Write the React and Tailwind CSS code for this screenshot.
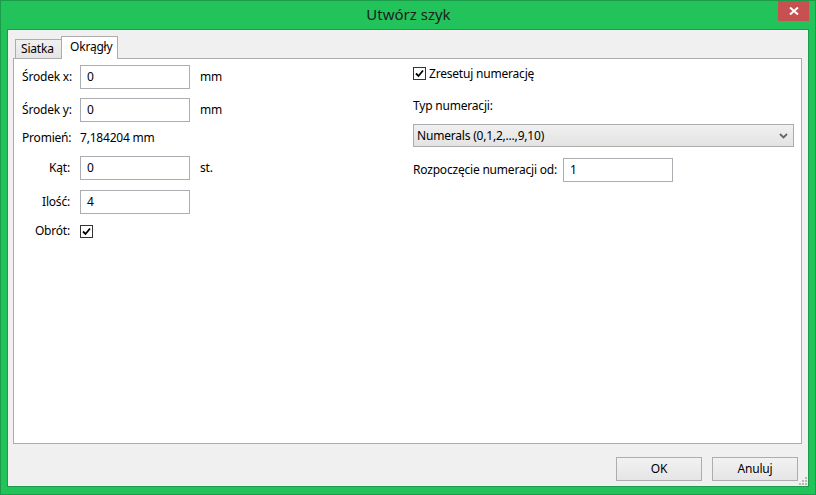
import React from 'react';

const Field = ({ value, className = '' }) => (
  <div className={`h-[24px] w-[110px] shrink-0 border border-[#abadb3] bg-white px-[6px] flex items-center ${className}`}>
    {value}
  </div>
);

const Check = () => (
  <div className="w-[13px] h-[13px] shrink-0 border border-[#333] bg-white flex items-center justify-center">
    <svg width="9" height="9" viewBox="0 0 9 9">
      <path d="M1 4.5 L3.5 7 L8 1.5" fill="none" stroke="#000" strokeWidth="1.8" />
    </svg>
  </div>
);

const Button = ({ children }) => (
  <button className="w-[86px] h-[24px] border border-[#adadad] bg-gradient-to-b from-[#f2f2f2] to-[#e5e5e5] text-black">
    {children}
  </button>
);

// label column of the left form, right edge at the same place for every row
const Label = ({ children, left = false }) => (
  <div className={`w-[66px] shrink-0 whitespace-nowrap pr-[10px] ${left ? 'pl-[8px]' : 'text-right'}`}>
    {children}
  </div>
);

const App = () => {
  return (
    <div className="w-[816px] h-[495px] bg-[#22c35a] border border-[#1b9c48] flex flex-col font-['Segoe_UI','Noto_Sans',sans-serif] text-[12px] text-black">
      {/* title bar */}
      <div className="h-[28px] flex relative">
        <div className="flex-1 flex items-center justify-center text-[15px] text-[#1e1e1e] pl-[1px] pb-[1px]">
          Utwórz szyk
        </div>
        <div className="absolute right-[6px] top-0 w-[31px] h-[20px] bg-[#c75050] flex items-center justify-center">
          <svg width="10" height="8" viewBox="0 0 10 8">
            <path d="M1 0.5 L9 7.5 M9 0.5 L1 7.5" stroke="#fff" strokeWidth="2" />
          </svg>
        </div>
      </div>

      {/* client area */}
      <div className="mx-[6px] h-[458px] border border-[#1b9c48] bg-[#f0f0f0] flex flex-col px-[5px] pt-[6px] relative tracking-[-0.2px]">
        {/* tabs */}
        <div className="flex items-end h-[22px] ml-[2px]">
          <div className="w-[47px] h-[19px] border border-b-0 border-[#acacac] bg-gradient-to-b from-[#f0f0f0] to-[#e5e5e5] px-[5px] flex items-center">
            Siatka
          </div>
          <div className="w-[57px] h-[23px] -ml-px -mb-px border border-b-0 border-[#acacac] bg-white px-[8px] pb-[3px] flex items-center relative z-10">
            Okrągły
          </div>
        </div>

        {/* tab page */}
        <div className="w-[789px] h-[386px] border border-[#acacac] bg-white flex">
          {/* left column */}
          <div className="w-[399px] flex flex-col pt-[6px]">
            <div className="flex items-center h-[24px]">
              <Label left>Środek x:</Label>
              <Field value="0" />
              <div className="ml-[10px]">mm</div>
            </div>
            <div className="flex items-center h-[24px] mt-[9px]">
              <Label left>Środek y:</Label>
              <Field value="0" />
              <div className="ml-[10px]">mm</div>
            </div>
            <div className="flex items-center h-[24px] mt-[4px]">
              <Label left>Promień:</Label>
              <div>7,184204 mm</div>
            </div>
            <div className="flex items-center h-[24px] mt-[6px]">
              <Label>Kąt:</Label>
              <Field value="0" />
              <div className="ml-[10px]">st.</div>
            </div>
            <div className="flex items-center h-[23px] mt-[10px]">
              <Label>Ilość:</Label>
              <Field value="4" className="h-[23px]" />
            </div>
            <div className="flex items-center h-[24px] mt-[6px]">
              <Label>Obrót:</Label>
              <Check />
            </div>
          </div>

          {/* right column */}
          <div className="w-[381px] flex flex-col pt-[8px]">
            <div className="flex items-center h-[13px]">
              <Check />
              <div className="ml-[3px]">Zresetuj numerację</div>
            </div>
            <div className="mt-[19px] h-[14px] flex items-center">Typ numeracji:</div>
            <div className="mt-[11px] h-[23px] border border-[#acacac] bg-gradient-to-b from-[#f0f0f0] to-[#e3e3e3] flex items-center justify-between pl-[3px] pr-[5px]">
              <div>Numerals (0,1,2,...,9,10)</div>
              <svg width="9" height="6" viewBox="0 0 9 6">
                <path d="M1 1 L4.5 4.5 L8 1" fill="none" stroke="#666" strokeWidth="1.8" />
              </svg>
            </div>
            <div className="mt-[12px] flex items-center h-[22px]">
              <div className="w-[150px] shrink-0 whitespace-nowrap">Rozpoczęcie numeracji od:</div>
              <Field value="1" className="h-[22px]" />
            </div>
          </div>
        </div>

        {/* dialog buttons */}
        <div className="flex justify-end gap-[10px] mt-[13px] mr-[5px]">
          <Button>OK</Button>
          <Button>Anuluj</Button>
        </div>

        {/* size grip */}
        <svg className="absolute right-[1px] bottom-[1px]" width="8" height="8" viewBox="0 0 8 8">
          <rect x="6" y="0" width="2" height="2" fill="#b8b8b8" />
          <rect x="3" y="3" width="2" height="2" fill="#b8b8b8" />
          <rect x="6" y="3" width="2" height="2" fill="#b8b8b8" />
          <rect x="0" y="6" width="2" height="2" fill="#b8b8b8" />
          <rect x="3" y="6" width="2" height="2" fill="#b8b8b8" />
          <rect x="6" y="6" width="2" height="2" fill="#b8b8b8" />
        </svg>
      </div>
    </div>
  );
};

export default App;
